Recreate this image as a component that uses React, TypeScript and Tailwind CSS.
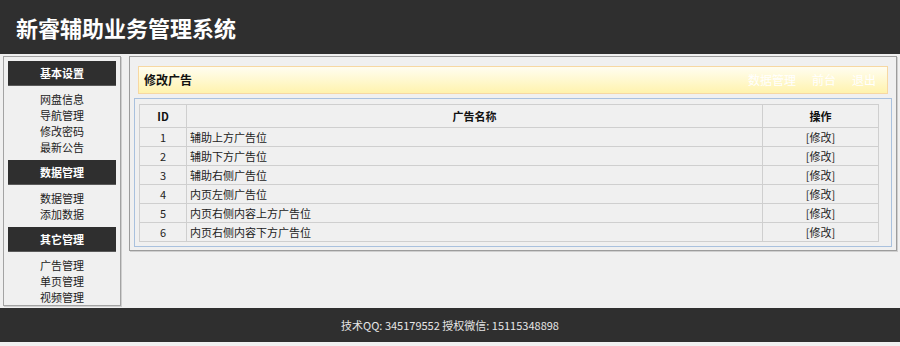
const menu = [
  { title: "基本设置", items: ["网盘信息", "导航管理", "修改密码", "最新公告"] },
  { title: "数据管理", items: ["数据管理", "添加数据"] },
  { title: "其它管理", items: ["广告管理", "单页管理", "视频管理"] },
];

const ads = [
  { id: 1, name: "辅助上方广告位" },
  { id: 2, name: "辅助下方广告位" },
  { id: 3, name: "辅助右侧广告位" },
  { id: 4, name: "内页左侧广告位" },
  { id: 5, name: "内页右侧内容上方广告位" },
  { id: 6, name: "内页右侧内容下方广告位" },
];

function Sidebar() {
  return (
    <aside className="w-[118px] shrink-0 border border-[#a3a3a3] px-[4px] pt-[4px] shadow-[1px_1px_0_#cfcfcf]">
      {menu.map((group, i) => (
        <div key={group.title} className={i > 0 ? "mt-[5px]" : ""}>
          <div className="flex h-[25px] items-center justify-center border-b border-[#5a5a5a] bg-[#2f2f2f] text-[11px] font-bold text-white">
            {group.title}
          </div>
          <ul className="mt-[5px] text-center text-[11px] leading-[16px] text-[#222]">
            {group.items.map((item) => (
              <li key={item}>{item}</li>
            ))}
          </ul>
        </div>
      ))}
    </aside>
  );
}

function AdTable() {
  return (
    <table className="w-[740px] border-collapse border border-[#cfcfcf] text-[11px] text-[#222]">
      <thead>
        <tr className="h-[23px]">
          <th className="w-[47px] border border-[#cfcfcf] font-bold text-[#111]">ID</th>
          <th className="w-[576px] border border-[#cfcfcf] font-bold text-[#111]">广告名称</th>
          <th className="border border-[#cfcfcf] font-bold text-[#111]">操作</th>
        </tr>
      </thead>
      <tbody>
        {ads.map((ad) => (
          <tr key={ad.id} className="h-[19px]">
            <td className="border border-[#cfcfcf] text-center">{ad.id}</td>
            <td className="border border-[#cfcfcf] pl-[3px]">{ad.name}</td>
            <td className="border border-[#cfcfcf] text-center">[修改]</td>
          </tr>
        ))}
      </tbody>
    </table>
  );
}

export default function App() {
  return (
    <div className="min-h-[346px] bg-[#f0f0f0] font-['Noto_Sans_CJK_SC','Liberation_Sans',sans-serif]">
      <header className="flex h-[54px] items-center bg-[#2f2f2f] pl-[16px]">
        <h1 className="text-[22px] font-bold text-white">新睿辅助业务管理系统</h1>
      </header>

      <div className="flex gap-[8px] px-[3px] pt-[2px]">
        <Sidebar />

        <main className="h-[195px] flex-1 border border-[#9c9c9c] shadow-[1px_1px_0_#cfcfcf]">
          <div className="mx-[8px] mt-[9px] flex h-[28px] items-center justify-between border border-[#f7d8a2] bg-gradient-to-b from-[#fffdf0] to-[#fff3ad] pl-[5px] pr-[11px]">
            <span className="text-[12px] font-bold text-[#111]">修改广告</span>
            <nav className="flex gap-[16px] text-[12px] text-white">
              <span>数据管理</span>
              <span>前台</span>
              <span>退出</span>
            </nav>
          </div>

          <div className="mx-[4px] mt-[4px] border border-[#a9c1de] px-[4px] pb-[4px] pt-[5px]">
            <AdTable />
          </div>
        </main>
      </div>

      <footer className="mt-[2px] flex h-[34px] items-center justify-center bg-[#2f2f2f] text-[11px] text-[#e6e6e6]">
        技术QQ: 345179552 授权微信: 15115348898
      </footer>
    </div>
  );
}
